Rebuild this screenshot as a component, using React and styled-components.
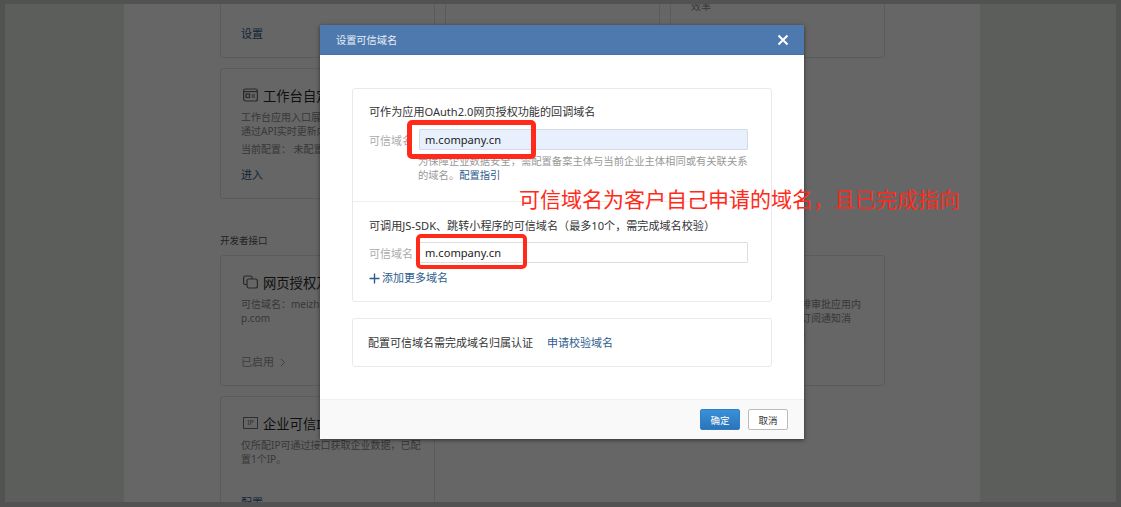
import React from "react";
import styled, { createGlobalStyle } from "styled-components";

const Global = createGlobalStyle`
  html, body { margin: 0; padding: 0; background: #fff; }
  body { font-family: "Noto Sans", "Noto Sans CJK SC", sans-serif; }
  * { box-sizing: border-box; }
`;

const Page = styled.div`
  position: relative;
  width: 1121px;
  height: 507px;
  overflow: hidden;
  background: #ccc;
  padding: 4px 5px 5px 5px;
`;
const Shell = styled.div`
  height: 100%;
  overflow: hidden;
  display: grid;
  grid-template-columns: 119px 856px 1fr;
  background: #e6ebe6;
`;
const Side = styled.div`
  background: #e6ebe6;
`;
const Main = styled.main`
  background: #fff;
  padding: 0 0 0 96px;
  border-left: 1px solid #ececec;
  border-right: 1px solid #ddd;
  margin-left: -1px;
  margin-right: -1px;
`;
const Board = styled.div`
  margin-top: -66px;
  display: flex;
  flex-direction: column;
  gap: 10px;
`;
const Row = styled.div`
  display: grid;
  grid-template-columns: repeat(3, 215px);
  column-gap: 10px;
`;
const SectionLabel = styled.div`
  height: 16px;
  line-height: 16px;
  font-size: 9.5px;
  color: #555;
  margin: 24px 0 -4px;
`;
const Card = styled.div`
  height: ${(p) => p.$h || 131}px;
  grid-column: ${(p) => p.$col || "auto"};
  border: 1px solid #e4e4e4;
  border-radius: 3px;
  padding: 16px 10px 15px 20px;
  display: flex;
  flex-direction: column;
  padding-bottom: ${(p) => p.$bottom || 15}px;
  background: #fff;
`;
const CardHead = styled.div`
  display: flex;
  align-items: center;
  gap: 5px;
  height: 20px;
  white-space: nowrap;
  font-size: 13.3px;
  color: #2a2a2a;
  margin-left: 2px;
`;
const Desc = styled.div`
  font-size: 10px;
  line-height: 14px;
  color: #8c8c8c;
  margin-top: ${(p) => p.$mt || 5}px;
  white-space: nowrap;
`;
const Action = styled.div`
  margin-top: auto;
  font-size: 11px;
  line-height: 16px;
  color: ${(p) => (p.$muted ? "#999" : "#2c5c8c")};
  display: flex;
  align-items: center;
  gap: 6px;
`;
const IpBadge = styled.span`
  width: 15px;
  height: 12px;
  border: 1px solid #777;
  font-size: 7px;
  line-height: 10px;
  text-align: center;
  color: #777;
`;
const Scrim = styled.div`
  position: absolute;
  inset: 0;
  background: rgba(0, 0, 0, 0.6);
`;
const Modal = styled.section`
  position: absolute;
  left: 320px;
  top: 25px;
  width: 484px;
  height: 414px;
  background: #fff;
  display: flex;
  flex-direction: column;
  box-shadow: 0 1px 4px rgba(0, 0, 0, 0.55);
`;
const ModalHeader = styled.header`
  height: 30px;
  flex: none;
  background: #4d79ae;
  border-bottom: 1px solid #4570a8;
  display: flex;
  align-items: center;
  justify-content: space-between;
  padding: 0 15px 0 16px;
  color: #e8eef6;
  font-size: 10.2px;
`;
const CloseBtn = styled.button`
  width: 12px;
  height: 12px;
  padding: 0;
  border: 0;
  background: none;
  color: #fff;
  display: block;
`;
const ModalBody = styled.div`
  flex: 1;
  padding: 33px 32px 0;
  display: flex;
  flex-direction: column;
  gap: 16px;
`;
const Panel = styled.div`
  border: 1px solid #e9e9e9;
  border-radius: 3px;
`;
const Block = styled.div`
  padding: ${(p) => p.$pad};
  border-top: ${(p) => (p.$divided ? "1px solid #eee" : "0")};
`;
const BlockTitle = styled.div`
  font-size: 11.1px;
  line-height: 16px;
  color: #333;
  white-space: nowrap;
`;
const FieldRow = styled.div`
  display: flex;
  align-items: center;
  margin-top: ${(p) => p.$mt}px;
`;
const FieldLabel = styled.label`
  width: 50px;
  font-size: 11px;
  color: #aaa;
  white-space: nowrap;
`;
const Field = styled.div`
  width: 329px;
  height: 21px;
  border: 1px solid ${(p) => (p.$filled ? "#d5dbe6" : "#ddd")};
  background: ${(p) => (p.$filled ? "#e8f0fe" : "#fff")};
  border-radius: 1px;
  padding-left: 5px;
  font-size: 11.1px;
  line-height: 19px;
  color: #222;
`;
const Hint = styled.div`
  margin: 4px 0 0 49px;
  width: 332px;
  font-size: 10.3px;
  line-height: 14px;
  color: #999;
`;
const Link = styled.a`
  color: #2c5c8c;
`;
const AddMore = styled.div`
  margin-top: 7px;
  display: flex;
  align-items: center;
  gap: 2px;
  font-size: 11px;
  line-height: 16px;
  color: #2c5c8c;
`;
const VerifyPanel = styled(Panel)`
  height: 49px;
  padding: 0 15px 1px;
  display: flex;
  align-items: center;
  gap: 14px;
  font-size: 11px;
  color: #333;
`;
const ModalFooter = styled.footer`
  height: 40px;
  flex: none;
  background: #f9f9f9;
  border-top: 1px solid #efefef;
  display: flex;
  align-items: center;
  justify-content: flex-end;
  gap: 8px;
  padding: 0 16px;
`;
const Button = styled.button`
  width: 40px;
  height: 21px;
  padding: 0;
  border-radius: 2px;
  font-family: inherit;
  font-size: 9.5px;
  border: 1px solid ${(p) => (p.$primary ? "#2f7fc4" : "#bbb")};
  color: ${(p) => (p.$primary ? "#fff" : "#333")};
  background: ${(p) => (p.$primary ? "linear-gradient(#3a90d8, #2b74ba)" : "#fff")};
`;
const RedBox = styled.div`
  position: absolute;
  left: ${(p) => p.$x}px;
  top: ${(p) => p.$y}px;
  width: ${(p) => p.$w}px;
  height: ${(p) => p.$h}px;
  border: ${(p) => p.$b}px solid #ff2a1a;
  border-radius: 5px;
`;
const Note = styled.div`
  position: absolute;
  left: 519px;
  top: 184px;
  font-size: 21px;
  line-height: 30px;
  color: #ff2a1a;
  white-space: nowrap;
`;

const PanelIcon = () => (
  <svg width="15" height="14" viewBox="0 0 15 14" fill="none" stroke="#666" strokeWidth="1.2">
    <rect x=".6" y="1" width="13.8" height="12" rx="2" />
    <path d="M.6 3.6h13.8" />
    <rect x="3" y="6" width="3.5" height="3.5" />
    <path d="M8.5 7H12M8.5 9H12" />
  </svg>
);
const AuthIcon = () => (
  <svg width="15" height="14" viewBox="0 0 15 14" fill="none" stroke="#666" strokeWidth="1.2">
    <path d="M3.5 9.5H2.1A1.5 1.5 0 0 1 .6 8V2.5A1.5 1.5 0 0 1 2.1 1H7.5A1.5 1.5 0 0 1 9 2.5V4" />
    <rect x="4" y="4" width="10.4" height="9" rx="2" />
  </svg>
);
const ChevronIcon = () => (
  <svg width="6" height="9" viewBox="0 0 6 9" fill="none" stroke="#999" strokeWidth="1">
    <path d="M1 1l3.5 3.5L1 8" />
  </svg>
);
const PlusIcon = () => (
  <svg width="11" height="11" viewBox="0 0 11 11" fill="none" stroke="#2c5c8c" strokeWidth="1.4">
    <path d="M5.5 .5v10M.5 5.5h10" />
  </svg>
);
const CloseIcon = () => (
  <svg width="12" height="12" viewBox="0 0 12 12" fill="none" stroke="currentColor" strokeWidth="2">
    <path d="M1.5 1.5l9 9M10.5 1.5l-9 9" />
  </svg>
);

export default function App() {
  return (
    <>
      <Global />
      <Page>
        <Shell>
          <Side />
          <Main>
            <Board>
              <Row>
                <Card $h={120}>
                  <Action>设置</Action>
                </Card>
                <Card $h={120} />
                <Card $h={120} $bottom={44}>
                  <Action><Desc $mt={1}>效率</Desc></Action>
                </Card>
              </Row>
              <Row>
                <Card>
                  <CardHead><PanelIcon />工作台自定义展示</CardHead>
                  <Desc>工作台应用入口展示样式<br />通过API实时更新内容</Desc>
                  <Desc $mt={4}>当前配置： 未配置</Desc>
                  <Action>进入</Action>
                </Card>
              </Row>
              <SectionLabel>开发者接口</SectionLabel>
              <Row>
                <Card>
                  <CardHead><AuthIcon />网页授权及JS-SDK</CardHead>
                  <Desc>可信域名：meizhuangapp.xxx<br />p.com</Desc>
                  <Action $muted>已启用 <ChevronIcon /></Action>
                </Card>
                <Card />
                <Card>
                  <CardHead>审批</CardHead>
                  <Desc>可调用接口来发起并安编排审批应用内<br />容，也可以通过接口来做订阅通知消<br />息并可以在此处进行设置。</Desc>
                </Card>
              </Row>
              <Row>
                <Card>
                  <CardHead><IpBadge>IP</IpBadge>企业可信IP</CardHead>
                  <Desc>仅所配IP可通过接口获取企业数据，已配<br />置1个IP。</Desc>
                  <Action>配置</Action>
                </Card>
              </Row>
            </Board>
          </Main>
          <Side />
        </Shell>
        <Scrim />
        <Modal>
          <ModalHeader>
            设置可信域名
            <CloseBtn aria-label="关闭"><CloseIcon /></CloseBtn>
          </ModalHeader>
          <ModalBody>
            <Panel>
              <Block $pad="15px 16px 19px">
                <BlockTitle>可作为应用OAuth2.0网页授权功能的回调域名</BlockTitle>
                <FieldRow $mt={9}>
                  <FieldLabel>可信域名</FieldLabel>
                  <Field $filled>m.company.cn</Field>
                </FieldRow>
                <Hint>为保障企业数据安全，需配置备案主体与当前企业主体相同或有关联关系的域名。<Link>配置指引</Link></Hint>
              </Block>
              <Block $divided $pad="16px 16px 15px">
                <BlockTitle>可调用JS-SDK、跳转小程序的可信域名（最多10个，需完成域名校验）</BlockTitle>
                <FieldRow $mt={8}>
                  <FieldLabel>可信域名</FieldLabel>
                  <Field>m.company.cn</Field>
                </FieldRow>
                <AddMore><PlusIcon />添加更多域名</AddMore>
              </Block>
            </Panel>
            <VerifyPanel>
              配置可信域名需完成域名归属认证
              <Link>申请校验域名</Link>
            </VerifyPanel>
          </ModalBody>
          <ModalFooter>
            <Button $primary>确定</Button>
            <Button>取消</Button>
          </ModalFooter>
        </Modal>
        <RedBox $x={407} $y={120} $w={129} $h={39} $b={5} />
        <RedBox $x={416} $y={234} $w={111} $h={35} $b={4} />
        <Note>可信域名为客户自己申请的域名，且已完成指向</Note>
      </Page>
    </>
  );
}
